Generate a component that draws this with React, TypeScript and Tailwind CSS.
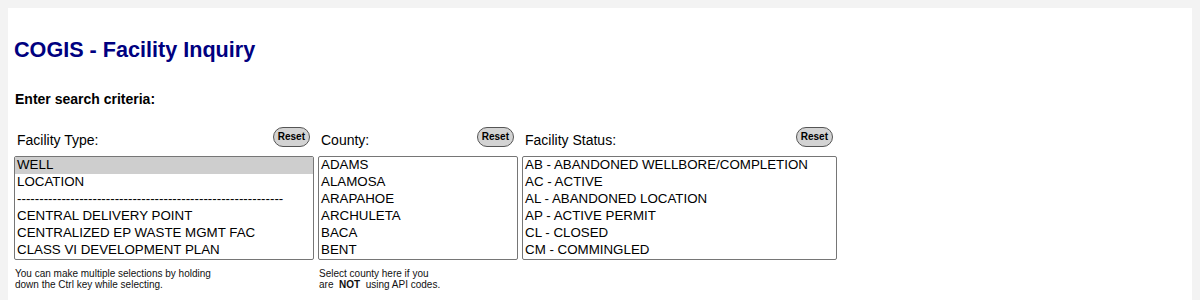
import React from "react";

const font = { fontFamily: '"Liberation Sans", Arial, sans-serif' };

interface ListProps {
  label: string;
  width: string;
  items: string[];
  selected?: number;
}

function ResetButton() {
  return (
    <button
      type="button"
      className="h-5 rounded-full border border-[#555] bg-[#d3d3d3] px-[4px] text-[10px] font-bold leading-none text-black"
    >
      Reset
    </button>
  );
}

function PickList({ label, width, items, selected }: ListProps) {
  return (
    <div className={`flex flex-col ${width}`}>
      {/* label + reset */}
      <div className="flex h-[29px] items-start justify-between pl-[3px] pr-[4px]">
        <span className="mt-[5px] text-[14px] leading-[16px] text-black">{label}</span>
        <ResetButton />
      </div>
      {/* listbox */}
      <div className="h-[104px] overflow-hidden rounded-[2px] border border-[#767676] bg-white">
        {items.map((item, i) => (
          <div
            key={item}
            className={`h-[17px] whitespace-nowrap px-[2px] pb-[1px] text-[13.33px] leading-[16px] text-black ${
              i === selected ? "bg-[#cecece]" : ""
            }`}
          >
            {item}
          </div>
        ))}
      </div>
    </div>
  );
}

export default function App() {
  return (
    <div className="min-h-[300px] bg-[#f3f3f3] px-2 pt-2" style={font}>
      <div className="min-h-[292px] bg-white pl-[6px] pt-[29px]">
        <h2 className="text-[21.6px] font-bold leading-[26px] text-[#000080]">COGIS - Facility Inquiry</h2>

        <p className="mt-[26px] pl-[1px] text-[14px] font-bold leading-[20px] text-black">
          Enter search criteria:
        </p>

        <div className="mt-[18px] flex gap-[4px]">
          <div className="flex flex-col">
            <PickList
              label="Facility Type:"
              width="w-[300px]"
              selected={0}
              items={[
                "WELL",
                "LOCATION",
                "------------------------------------------------------------",
                "CENTRAL DELIVERY POINT",
                "CENTRALIZED EP WASTE MGMT FAC",
                "CLASS VI DEVELOPMENT PLAN",
              ]}
            />
            <p className="mt-[8px] pl-[1px] text-[10px] leading-[11px] text-[#111]">
              You can make multiple selections by holding
              <br />
              down the Ctrl key while selecting.
            </p>
          </div>

          <div className="flex flex-col">
            <PickList
              label="County:"
              width="w-[200px]"
              items={["ADAMS", "ALAMOSA", "ARAPAHOE", "ARCHULETA", "BACA", "BENT"]}
            />
            <p className="mt-[8px] pl-[1px] text-[10px] leading-[11px] text-[#111]">
              Select county here if you
              <br />
              are&nbsp; <b>NOT</b>&nbsp; using API codes.
            </p>
          </div>

          <PickList
            label="Facility Status:"
            width="w-[315px]"
            items={[
              "AB - ABANDONED WELLBORE/COMPLETION",
              "AC - ACTIVE",
              "AL - ABANDONED LOCATION",
              "AP - ACTIVE PERMIT",
              "CL - CLOSED",
              "CM - COMMINGLED",
            ]}
          />
        </div>
      </div>
    </div>
  );
}
